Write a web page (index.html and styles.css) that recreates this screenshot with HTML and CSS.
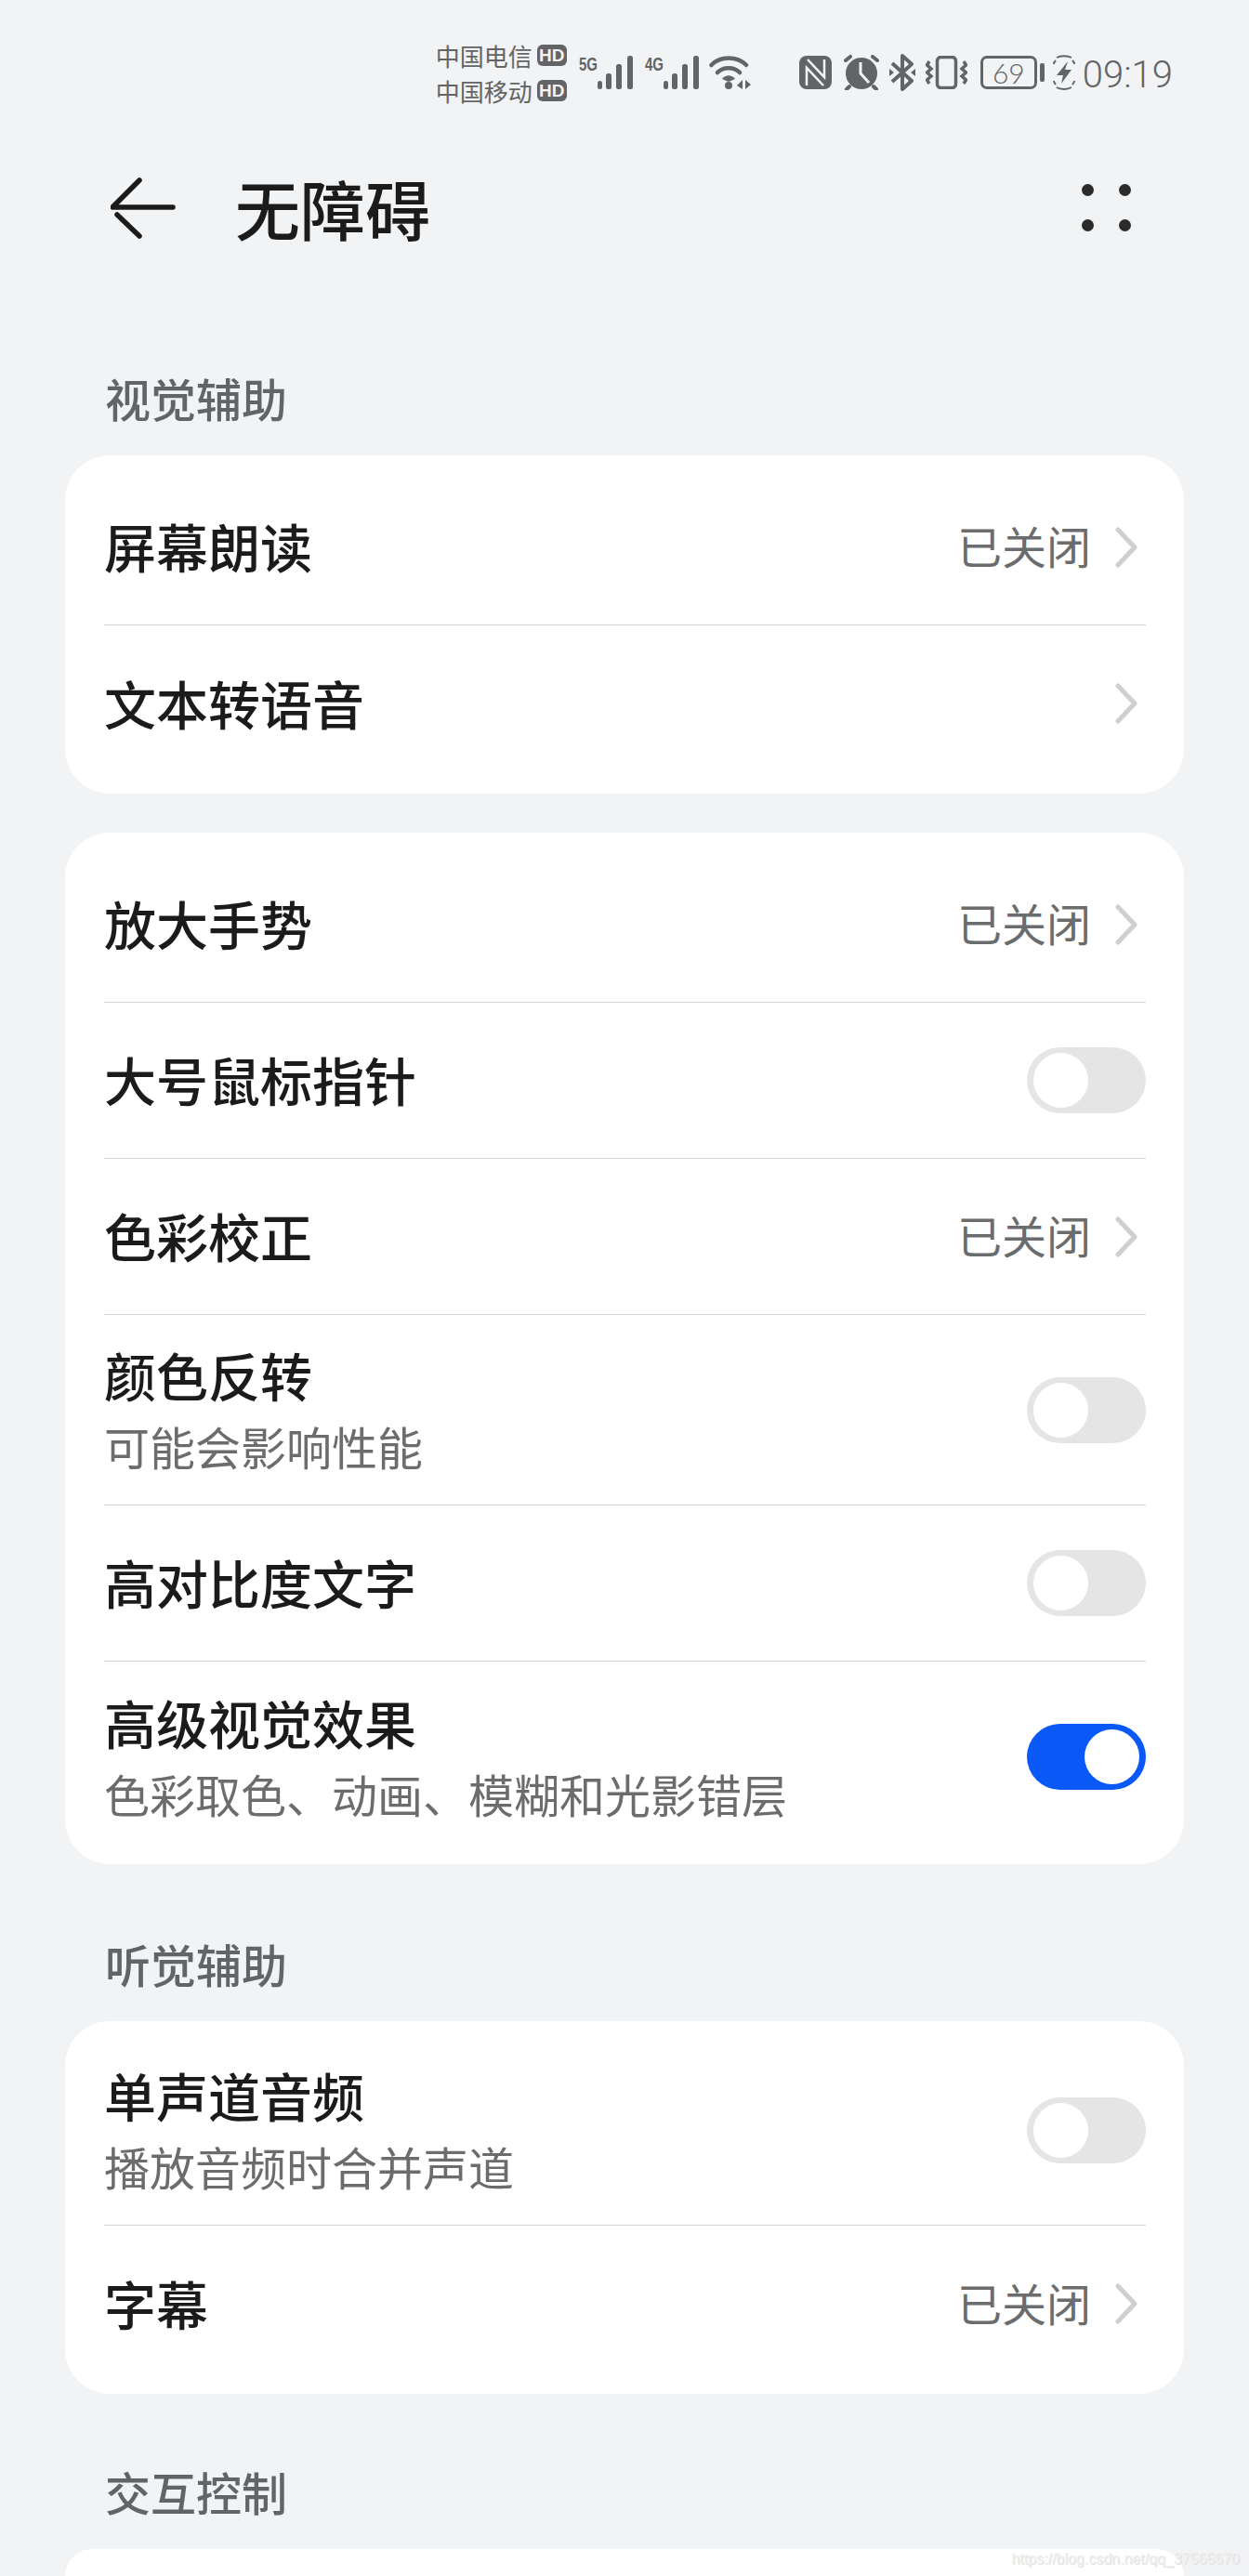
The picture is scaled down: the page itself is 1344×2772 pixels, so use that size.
FILE: index.html
```html
<!DOCTYPE html>
<html lang="zh">
  <head>
    <meta charset="utf-8">
    <title>无障碍</title>
    <link rel="stylesheet" href="styles.css">
  </head>
  <body>
    <div class="status-bar">
      <div class="carriers">
        <div class="carrier"><span>中国电信</span><b class="hd">HD</b></div>
        <div class="carrier"><span>中国移动</span><b class="hd">HD</b></div>
      </div>
      <div class="signal signal-first">
        <span class="net">5G</span>
        <svg width="38" height="36" viewBox="0 0 38 36"><g fill="#636466"><rect x="0" y="27" width="5" height="9" rx="2.5"/><rect x="9" y="19" width="6" height="17" rx="2.5"/><rect x="20" y="9" width="6" height="27" rx="2.5"/><rect x="32" y="0" width="6" height="36" rx="2.5"/></g></svg>
      </div>
      <div class="signal">
        <span class="net">4G</span>
        <svg width="38" height="36" viewBox="0 0 38 36"><g fill="#636466"><rect x="0" y="27" width="5" height="9" rx="2.5"/><rect x="9" y="19" width="6" height="17" rx="2.5"/><rect x="20" y="9" width="6" height="27" rx="2.5"/><rect x="32" y="0" width="6" height="36" rx="2.5"/></g></svg>
      </div>
      <svg class="icon-wifi" width="45" height="38" viewBox="0 0 45 38"><g fill="none" stroke="#636466" stroke-width="4.5" stroke-linecap="round"><path d="M2.500 11 C12 1 30 1 40 11"/><path d="M9 19 C15 12.500 27 12.500 33 19"/></g><path d="M14 26 C18 21 24 21 28 26 L21 29 Z" fill="#636466"/><circle cx="21" cy="33" r="4" fill="#636466"/><path d="M36 27 V37 L30 33 Z M39 27 V37 L45 32 Z" fill="#636466"/></svg>
      <svg class="icon-nfc" width="35" height="36" viewBox="0 0 35 36"><rect width="35" height="36" rx="8" fill="#636466"/><path d="M8 32 V13 L26 32 M27 4 V23 L9 4" fill="none" stroke="#f1f3f5" stroke-width="2.500"/></svg>
      <svg class="icon-alarm" width="38" height="38" viewBox="0 0 38 38"><circle cx="19" cy="20" r="17" fill="#636466"/><path d="M2 6 L7 2 M36 6 L31 2 M6 34 L3 37 M32 34 L35 37" stroke="#636466" stroke-width="4" stroke-linecap="round"/><path d="M18 8 V20 L27 30" fill="none" stroke="#f1f3f5" stroke-width="3"/></svg>
      <svg class="icon-bt" width="28" height="40" viewBox="0 0 28 40"><path d="M3 10 L24 29 L14 38 V2 L24 11 L3 30" fill="none" stroke="#636466" stroke-width="4" stroke-linejoin="round"/><path d="M0 16 L5 20 L0 24 Z M28 16 L23 20 L28 24 Z" fill="#636466"/></svg>
      <svg class="icon-vibrate" width="45" height="36" viewBox="0 0 45 36"><rect x="12.500" y="1.500" width="20" height="33" rx="4" fill="none" stroke="#636466" stroke-width="3.500"/><path d="M4 6 L1.500 10 L6 14 L1.500 18 L6 22 L1.500 26 L4 30 M41 6 L43.500 10 L39 14 L43.500 18 L39 22 L43.500 26 L41 30" fill="none" stroke="#636466" stroke-width="3.500"/></svg>
      <div class="battery">
        <div class="battery-body">69</div>
        <div class="battery-nub"></div>
      </div>
      <svg class="icon-charge" width="24" height="40" viewBox="0 0 24 40"><path d="M16 8 L4 23 H11 L9 32 L20 17 H13 Z" fill="#636466"/><path d="M4 4 C8 1.500 16 1.500 20 4 M1 11 C1 9 2 8 3 7 M23 11 C23 9 22 8 21 7 M1 29 C1 31 2 32 3 33 M23 29 C23 31 22 32 21 33 M4 36 C8 38.500 16 38.500 20 36" fill="none" stroke="#636466" stroke-width="2"/></svg>
      <span class="time">09:19</span>
    </div>

    <header class="app-bar">
      <svg class="back" width="70" height="66" viewBox="0 0 70 66"><path d="M31 3 L2 32 H67 M7 40 L31 63" fill="none" stroke="#1b1b1b" stroke-width="5.500" stroke-linecap="round" stroke-linejoin="round"/></svg>
      <h1>无障碍</h1>
      <div class="more"><i></i><i></i><i></i><i></i></div>
    </header>

    <h2 class="section-title section-first">视觉辅助</h2>
    <section class="card">
      <div class="row">
        <div class="row-text"><div class="row-title">屏幕朗读</div></div>
        <span class="value">已关闭</span>
        <svg class="chevron" width="24" height="44" viewBox="0 0 24 44"><path d="M3 3 L21 22 L3 41" fill="none" stroke="#cfcfd0" stroke-width="5" stroke-linecap="round" stroke-linejoin="round"/></svg>
      </div>
      <div class="row">
        <div class="row-text"><div class="row-title">文本转语音</div></div>
        <svg class="chevron" width="24" height="44" viewBox="0 0 24 44"><path d="M3 3 L21 22 L3 41" fill="none" stroke="#cfcfd0" stroke-width="5" stroke-linecap="round" stroke-linejoin="round"/></svg>
      </div>
    </section>

    <section class="card card-next">
      <div class="row">
        <div class="row-text"><div class="row-title">放大手势</div></div>
        <span class="value">已关闭</span>
        <svg class="chevron" width="24" height="44" viewBox="0 0 24 44"><path d="M3 3 L21 22 L3 41" fill="none" stroke="#cfcfd0" stroke-width="5" stroke-linecap="round" stroke-linejoin="round"/></svg>
      </div>
      <div class="row">
        <div class="row-text"><div class="row-title">大号鼠标指针</div></div>
        <div class="switch"></div>
      </div>
      <div class="row">
        <div class="row-text"><div class="row-title">色彩校正</div></div>
        <span class="value">已关闭</span>
        <svg class="chevron" width="24" height="44" viewBox="0 0 24 44"><path d="M3 3 L21 22 L3 41" fill="none" stroke="#cfcfd0" stroke-width="5" stroke-linecap="round" stroke-linejoin="round"/></svg>
      </div>
      <div class="row row-tall">
        <div class="row-text"><div class="row-title">颜色反转</div><div class="row-sub">可能会影响性能</div></div>
        <div class="switch"></div>
      </div>
      <div class="row">
        <div class="row-text"><div class="row-title">高对比度文字</div></div>
        <div class="switch"></div>
      </div>
      <div class="row row-tall">
        <div class="row-text"><div class="row-title">高级视觉效果</div><div class="row-sub">色彩取色、动画、模糊和光影错层</div></div>
        <div class="switch on"></div>
      </div>
    </section>

    <h2 class="section-title section-gap">听觉辅助</h2>
    <section class="card">
      <div class="row row-tall">
        <div class="row-text"><div class="row-title">单声道音频</div><div class="row-sub">播放音频时合并声道</div></div>
        <div class="switch"></div>
      </div>
      <div class="row">
        <div class="row-text"><div class="row-title">字幕</div></div>
        <span class="value">已关闭</span>
        <svg class="chevron" width="24" height="44" viewBox="0 0 24 44"><path d="M3 3 L21 22 L3 41" fill="none" stroke="#cfcfd0" stroke-width="5" stroke-linecap="round" stroke-linejoin="round"/></svg>
      </div>
    </section>

    <h2 class="section-title section-gap section-last">交互控制</h2>
    <section class="card card-cut"></section>

    <div class="watermark">https://blog.csdn.net/qq_37565670</div>
  </body>
</html>
```

FILE: styles.css
```css
html,
body {
  margin: 0;
  height: 2772px;
  overflow: hidden;
}

body {
  position: relative;
  background-color: #f1f3f5;
  color: #1b1b1b;
  font-family: "Noto Sans CJK SC", "Noto Sans", sans-serif;
}

.status-bar {
  display: flex;
  align-items: center;
  justify-content: flex-end;
  box-sizing: border-box;
  height: 120px;
  padding-top: 36px;
  padding-right: 82px;
  color: #636466;
}

.carriers {
  display: flex;
  flex-direction: column;
  gap: 13px;
  margin-right: 13px;
}

.carrier {
  display: flex;
  align-items: center;
  gap: 5px;
  height: 25px;
  font-size: 26px;
  line-height: 25px;
}

.hd {
  width: 32px;
  height: 23px;
  border-radius: 6px;
  background-color: #636466;
  color: #f1f3f5;
  font-family: "Liberation Sans", sans-serif;
  font-size: 19px;
  line-height: 23px;
  text-align: center;
}

.signal {
  display: flex;
  align-items: flex-end;
  margin-right: 11px;
}

.signal-first {
  margin-right: 13px;
}

.net {
  align-self: flex-start;
  width: 20px;
  font-family: "Liberation Sans", sans-serif;
  font-size: 20px;
  font-weight: 700;
  line-height: 18px;
  transform: scaleX(0.75);
  transform-origin: left center;
}

.icon-wifi {
  margin-right: 52px;
}

.icon-nfc {
  margin-right: 13px;
}

.icon-alarm {
  margin-right: 11px;
}

.icon-bt {
  margin-right: 11px;
}

.icon-vibrate {
  margin-right: 14px;
}

.battery {
  display: flex;
  align-items: center;
  gap: 3px;
  margin-right: 9px;
}

.battery-body {
  box-sizing: border-box;
  width: 61px;
  height: 36px;
  border: 3px solid #636466;
  border-radius: 7px;
  font-family: "Lato", sans-serif;
  font-size: 30px;
  font-weight: 300;
  line-height: 30px;
  text-align: center;
}

.battery-nub {
  width: 5px;
  height: 20px;
  border-radius: 2px;
  background-color: #636466;
}

.time {
  margin-top: 6px;
  margin-left: 8px;
  font-family: "Roboto", sans-serif;
  font-size: 40px;
  font-weight: 300;
  line-height: 40px;
}

.app-bar {
  position: relative;
  display: flex;
  align-items: center;
  height: 128px;
  margin-top: 40px;
  padding-left: 119px;
}

.back {
  margin-right: 64px;
}

h1 {
  margin: 0;
  font-size: 70px;
  font-weight: 500;
  line-height: 90px;
}

.more {
  position: absolute;
  top: 38px;
  right: 127px;
  display: grid;
  grid-template-columns: 13px 13px;
  column-gap: 27px;
  row-gap: 25px;
}

.more i {
  width: 13px;
  height: 13px;
  border-radius: 50%;
  background-color: #2b2b2b;
}

.section-title {
  margin: 0;
  padding-left: 113px;
  padding-bottom: 30px;
  color: #636466;
  font-size: 49px;
  font-weight: 500;
  line-height: 64px;
}

.section-first {
  padding-top: 108px;
}

.section-gap {
  padding-top: 75px;
}

.section-last {
  padding-top: 73px;
}

.card {
  margin: 0 70px;
  padding: 15px 41px 13px 42px;
  border-radius: 48px;
  background-color: #ffffff;
}

.card-next {
  margin-top: 42px;
}

.card-cut {
  height: 29px;
  padding: 0;
  border-radius: 48px 48px 0 0;
}

.row {
  display: flex;
  align-items: center;
  box-sizing: border-box;
  height: 168px;
  border-bottom: 1.5px solid #d2d2d4;
}

.row:last-child {
  border-bottom: 0;
}

.row-tall {
  height: 205px;
}

.row-text {
  flex: 1;
  min-width: 0;
  padding-bottom: 3px;
}

.row-tall .row-text {
  padding-bottom: 5px;
}

.row-title {
  font-size: 56px;
  font-weight: 500;
  line-height: 76px;
}

.row-sub {
  margin-top: 7px;
  color: #6b6c6e;
  font-size: 49px;
  line-height: 64px;
}

.value {
  margin-right: 26px;
  padding-bottom: 5px;
  color: #6b6c6e;
  font-size: 48px;
}

.chevron {
  margin-right: 9px;
}

.switch {
  position: relative;
  width: 128px;
  height: 71px;
  border-radius: 36px;
  background-color: #e5e5e6;
}

.switch::after {
  content: "";
  position: absolute;
  top: 6px;
  left: 7px;
  width: 59px;
  height: 59px;
  border-radius: 50%;
  background-color: #ffffff;
}

.switch.on {
  background-color: #0a59f7;
}

.switch.on::after {
  left: auto;
  right: 7px;
}

.watermark {
  position: absolute;
  top: 2742px;
  right: 10px;
  color: #efeff0;
  font-family: "Liberation Sans", sans-serif;
  font-size: 16px;
  line-height: 24px;
  text-shadow: 1px 1px 1px #dcdcde;
}
```
